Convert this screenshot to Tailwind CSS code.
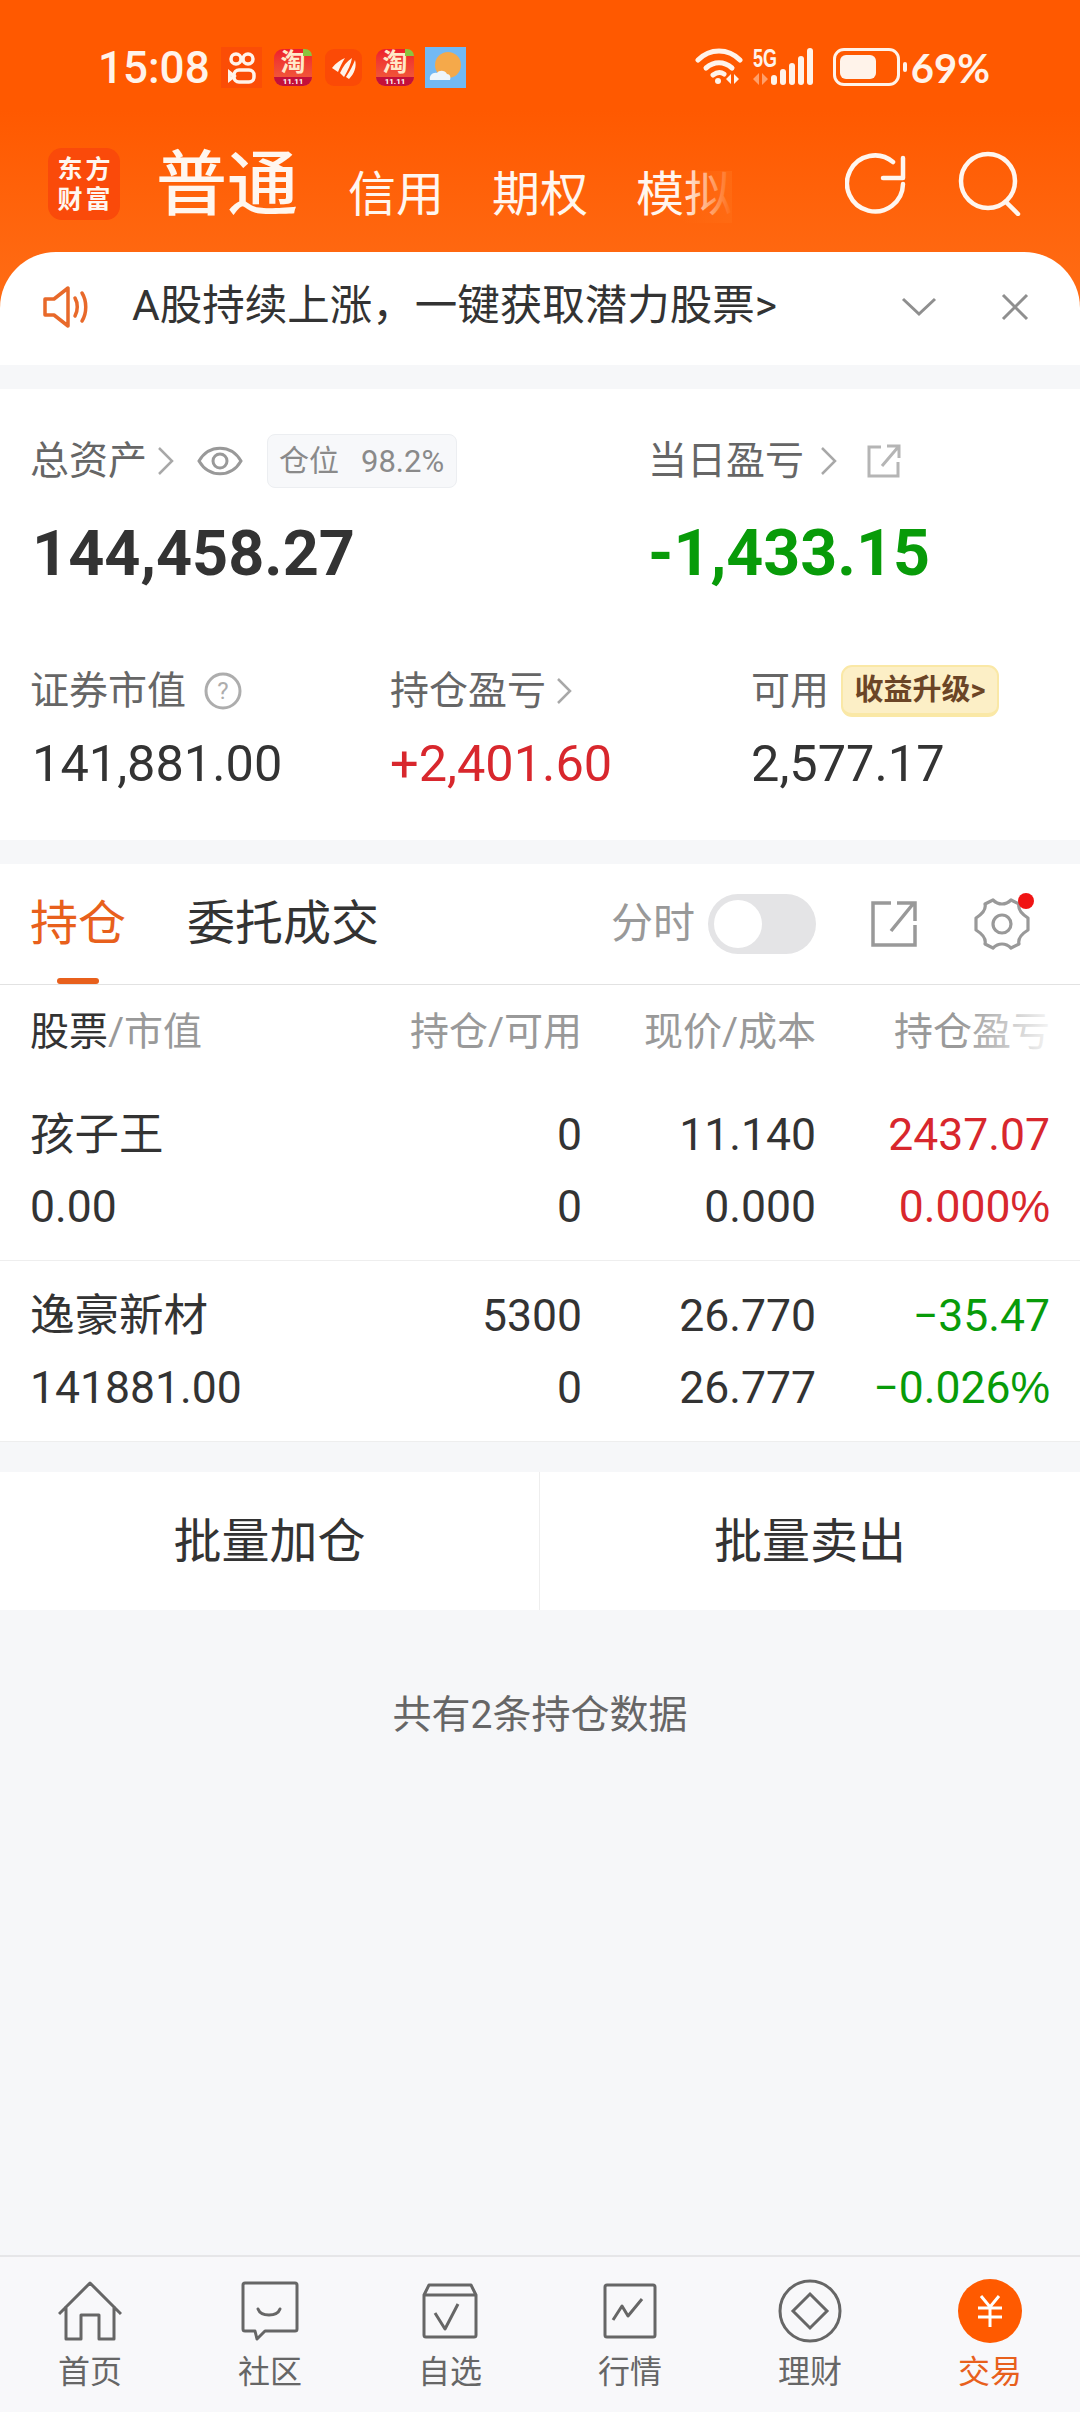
<!DOCTYPE html>
<html lang="zh-CN">
<head>
    <meta charset="UTF-8">
    <meta name="viewport" content="width=device-width, initial-scale=1.0">
    <title>交易 - 持仓</title>
    <script src="https://cdn.jsdelivr.net/npm/@tailwindcss/browser@4"></script>
</head>
<body class="w-[1080px] h-[2412px] overflow-hidden bg-[#f6f7f9] flex flex-col font-['Roboto','Noto_Sans_CJK_SC',sans-serif] text-[#333]">

    <!-- Orange top: status bar + account tabs -->
    <div class="bg-gradient-to-b from-[#ff5900] from-30% to-[#ff7219] h-[365px] shrink-0">
        <div class="h-[100px] pt-[47px] pl-[98px] pr-[90px] flex items-start text-[#fff3ea]">
            <span class="w-[123px] h-[41px] flex items-center text-[44px] font-medium leading-none">15:08</span>
            <!-- notification icons -->
            <div class="w-[41px] h-[41px] bg-[#fb4d06] flex items-center justify-center">
                <svg width="28" height="36" viewBox="0 0 28 36" fill="none" stroke="#fff3ea" stroke-width="3.5"><circle cx="8" cy="9" r="5"/><circle cx="20" cy="9" r="5"/><rect x="6" y="20" width="20" height="12" rx="5"/><path d="M6 26 1 22v8z"/></svg>
            </div>
            <div class="ml-[12px] mt-[2px] w-[38px] h-[37px] rounded-[9px] bg-gradient-to-b from-[#ee1c2c] to-[#f2603c] flex flex-col items-center relative">
                <span class="h-[28px] text-[25px] font-bold leading-[28px] text-[#ffe9c9]">淘</span>
                <span class="w-full h-[9px] rounded-b-[9px] bg-[#c4103a] text-[8px] font-bold leading-[9px] text-white text-center">11.11</span>
                <span class="absolute top-0 right-0 w-[9px] h-[7px] rounded-tr-[9px] bg-[#8ac43f]"></span>
            </div>
            <div class="ml-[13px] mt-[2px] w-[37px] h-[37px] rounded-[9px] bg-[#fb4a06] flex items-center justify-center">
                <svg width="26" height="24" viewBox="0 0 26 24" fill="#fff3ea"><path d="M1 12C5 7 9 4 14 2 11 7 9 11 7 16zM9 17C12 10 16 5 21 2 20 8 17 14 13 21zM15 21C19 15 22 9 24 4 26 11 23 18 18 23z"/></svg>
            </div>
            <div class="ml-[14px] mt-[2px] w-[38px] h-[37px] rounded-[9px] bg-gradient-to-b from-[#ee1c2c] to-[#f2603c] flex flex-col items-center relative">
                <span class="h-[28px] text-[25px] font-bold leading-[28px] text-[#ffe9c9]">淘</span>
                <span class="w-full h-[9px] rounded-b-[9px] bg-[#c4103a] text-[8px] font-bold leading-[9px] text-white text-center">11.11</span>
                <span class="absolute top-0 right-0 w-[9px] h-[7px] rounded-tr-[9px] bg-[#8ac43f]"></span>
            </div>
            <div class="ml-[11px] w-[41px] h-[41px] bg-[#72b9f4]">
                <svg width="41" height="41" viewBox="0 0 41 41"><circle cx="23" cy="18" r="13" fill="#f5a94a"/><path d="M5 33c-1-5 3-8 7-7 2-3 8-3 10 1 3 0 4 3 3 6z" fill="#eef6fb"/></svg>
            </div>
            <!-- system icons -->
            <div class="ml-auto flex items-start">
                <svg width="48" height="38" viewBox="0 0 48 38" fill="none" stroke="#fff3ea" stroke-width="5" stroke-linecap="round">
                    <path d="M3 13C15 1 33 1 45 13"/><path d="M11 21c8-7 18-7 26 0"/><path d="M18 28c4-3 8-3 11-1"/>
                    <circle cx="23" cy="34" r="3" fill="#fff3ea" stroke="none"/>
                    <path d="M36 27v10l-5-5zM39 27v10l5-5z" fill="#fff3ea" stroke="none"/>
                </svg>
                <div class="ml-[10px] w-[26px] flex flex-col">
                    <span class="mt-[1px] h-[20px] text-[25px] font-bold leading-[20px] font-['Liberation_Sans'] scale-x-[0.72] origin-left whitespace-nowrap">5G</span>
                    <svg class="mt-[5px]" width="16" height="12" viewBox="0 0 16 12" fill="#ff9f6a"><path d="M6 0v12L0 6zM9 0v12l6-6z"/></svg>
                </div>
                <div class="ml-[-8px] mt-[1px] h-[37px] flex items-end gap-[3px]">
                    <span class="w-[6px] h-[10px] bg-[#fff3ea] rounded-[3px]"></span>
                    <span class="w-[6px] h-[16px] bg-[#fff3ea] rounded-[3px]"></span>
                    <span class="w-[6px] h-[22px] bg-[#fff3ea] rounded-[3px]"></span>
                    <span class="w-[6px] h-[29px] bg-[#fff3ea] rounded-[3px]"></span>
                    <span class="w-[6px] h-[37px] bg-[#fff3ea] rounded-[3px]"></span>
                </div>
                <div class="ml-[20px] mt-[1px] w-[67px] h-[38px] rounded-[11px] border-[3px] border-[#fff3ea] p-[4px]">
                    <div class="w-[36px] h-full bg-[#fff3ea] rounded-[6px]"></div>
                </div>
                <span class="ml-[3px] mt-[15px] w-[4px] h-[10px] rounded-[2px] bg-[#fff3ea]"></span>
                <span class="ml-[4px] mt-[3px] text-[40px] font-['Lato'] font-bold leading-[36px] whitespace-nowrap">69%</span>
            </div>
        </div>

        <div class="h-[152px] pl-[48px] flex items-start text-[#fff6ef]">
            <div class="mt-[48px] w-[72px] h-[72px] rounded-[14px] bg-[#fa4a0a] grid grid-cols-2 place-items-center py-[6px] px-[8px] text-[25px] font-bold leading-none">
                <span>东</span><span>方</span><span>财</span><span>富</span>
            </div>
            <span class="ml-[36px] mt-[47px] text-[71px] font-medium leading-[76px]">普通</span>
            <span class="ml-[50px] mt-[71px] text-[48px] leading-[48px]">信用</span>
            <span class="ml-[48px] mt-[71px] text-[48px] leading-[48px]">期权</span>
            <div class="relative ml-[48px] mt-[71px] w-[120px]">
                <span class="text-[48px] leading-[48px]">模拟</span>
                <span class="absolute left-[46px] top-0 w-[50px] h-[52px] bg-gradient-to-r from-[#ff6a12]/0 to-[#ff6a12]"></span>
            </div>
            <svg class="ml-[89px] mt-[52px]" width="64" height="64" viewBox="0 0 64 64" fill="none" stroke="#fff6ef" stroke-width="4.5" stroke-linecap="round" stroke-linejoin="round">
                <path d="M58 32A28 28 0 1 1 48 10"/><path d="M58 6v20H38"/>
            </svg>
            <svg class="ml-[48px] mt-[50px]" width="66" height="66" viewBox="0 0 66 66" fill="none" stroke="#fff6ef" stroke-width="4.5" stroke-linecap="round">
                <circle cx="31" cy="31" r="27"/><path d="M49 52l12 12"/>
            </svg>
        </div>

        <!-- Notice -->
        <div class="h-[113px] bg-white rounded-t-[56px] pl-[43px] pb-[4px] flex items-center">
            <svg width="46" height="42" viewBox="0 0 46 42" fill="none" stroke="#e8692a" stroke-width="3.5" stroke-linejoin="round" stroke-linecap="round">
                <path d="M2 13h9L25 2v38L11 29H2z"/><path d="M32 12c3 5 3 13 0 18"/><path d="M39 7c5 8 5 20 0 28"/>
            </svg>
            <span class="ml-[43px] w-[760px] text-[42.5px] leading-none text-[#333] whitespace-nowrap">A股持续上涨，一键获取潜力股票&gt;</span>
            <svg class="ml-[9px]" width="36" height="20" viewBox="0 0 36 20" fill="none" stroke="#8f8f8f" stroke-width="3"><path d="M2 2l16 15L34 2"/></svg>
            <svg class="ml-[64px]" width="28" height="28" viewBox="0 0 28 28" fill="none" stroke="#8f8f8f" stroke-width="3"><path d="M2 2l24 24M26 2 2 26"/></svg>
        </div>
    </div>

    <!-- Account summary -->
    <section class="mt-[24px] h-[451px] bg-white shrink-0 pl-[30px]">
        <div class="pt-[45px] flex items-center h-[99px]">
            <div class="w-[618px] flex items-center">
                <span class="text-[39px] text-[#666] leading-none">总资产</span>
                <svg class="ml-[10px]" width="18" height="30" viewBox="0 0 18 30" fill="none" stroke="#a8a8a8" stroke-width="2.5"><path d="M2 2l13 13L2 28"/></svg>
                <svg class="ml-[22px]" width="46" height="32" viewBox="0 0 46 32" fill="none" stroke="#999" stroke-width="3"><path d="M2 16C12 -1 34 -1 44 16 34 33 12 33 2 16z"/><circle cx="23" cy="16" r="7"/></svg>
                <div class="ml-[24px] w-[190px] h-[54px] rounded-[8px] border border-[#eceef1] bg-[#f7f8fa] flex items-center pl-[11px] text-[30px] text-[#8a8a8a] leading-none">
                    <span>仓位</span><span class="ml-[22px] text-[31px]">98.2%</span>
                </div>
            </div>
            <span class="text-[39px] text-[#666] leading-none">当日盈亏</span>
            <svg class="ml-[16px]" width="18" height="30" viewBox="0 0 18 30" fill="none" stroke="#a8a8a8" stroke-width="2.5"><path d="M2 2l13 13L2 28"/></svg>
            <svg class="ml-[29px]" width="34" height="34" viewBox="0 0 34 34" fill="none" stroke="#b5b5b5" stroke-width="3"><path d="M14 3H2v29h29V18M15 22 32 2M20 2h12v12"/></svg>
        </div>
        <div class="mt-[34px] flex items-center h-[62px] font-bold text-[63px] leading-none">
            <span class="w-[618px] pl-[2px] text-[#333]">144,458.27</span>
            <span class="text-[64.5px] text-[#089b09]">-1,433.15</span>
        </div>
        <div class="mt-[81px] flex items-center h-[52px]">
            <div class="w-[360px] flex items-center">
                <span class="text-[39px] text-[#666] leading-none">证券市值</span>
                <svg class="ml-[18px]" width="38" height="38" viewBox="0 0 38 38" fill="none" stroke="#adadad" stroke-width="3"><circle cx="19" cy="19" r="17"/><text x="19" y="27" text-anchor="middle" font-size="24" fill="#adadad" stroke="none" font-family="Roboto">?</text></svg>
            </div>
            <div class="w-[361px] flex items-center">
                <span class="text-[39px] text-[#666] leading-none">持仓盈亏</span>
                <svg class="ml-[10px]" width="16" height="28" viewBox="0 0 16 28" fill="none" stroke="#a8a8a8" stroke-width="2.5"><path d="M2 2l12 12L2 26"/></svg>
            </div>
            <span class="text-[39px] text-[#666] leading-none">可用</span>
            <div class="ml-[12px] w-[158px] h-[52px] rounded-[11px] bg-[#fcefc6] border-[2px] border-b-[4px] border-[#fae8a6] flex items-center justify-center text-[29px] font-bold text-[#6b4526] leading-none whitespace-nowrap">收益升级&gt;</div>
        </div>
        <div class="mt-[22px] flex items-center h-[50px] text-[50.5px] leading-none text-[#333]">
            <span class="w-[360px] pl-[2px]">141,881.00</span>
            <span class="w-[361px] text-[#d8272d]">+2,401.60</span>
            <span>2,577.17</span>
        </div>
    </section>

    <!-- Positions -->
    <section class="mt-[24px] bg-white shrink-0 border-b border-[#eeeeee]">
        <div class="h-[121px] border-b border-[#e2e2e2] pl-[30px] flex items-center relative">
            <span class="text-[48px] text-[#e8601c] leading-none">持仓</span>
            <span class="ml-[61px] text-[48px] text-[#333] leading-none">委托成交</span>
            <span class="ml-[232px] text-[42px] text-[#999] leading-none">分时</span>
            <div class="ml-[13px] w-[108px] h-[60px] rounded-full bg-[#e4e4e6] p-[6px]">
                <div class="w-[48px] h-[48px] rounded-full bg-white"></div>
            </div>
            <svg class="ml-[55px]" width="46" height="46" viewBox="0 0 46 46" fill="none" stroke="#999" stroke-width="3.5"><path d="M20 2H2v42h42V24M20 30 42 3M26 2h18v18"/></svg>
            <div class="ml-[57px] relative">
                <svg width="56" height="54" viewBox="0 0 56 54" fill="none" stroke="#999" stroke-width="3.2" stroke-linejoin="round"><path d="M19 3c3 3 6 4 9 4s6-1 9-4l8 4c-1 4 1 9 9 14v12c-8 5-10 10-9 14l-8 4c-3-3-6-4-9-4s-6 1-9 4l-8-4c1-4-1-9-9-14V21c8-5 10-10 9-14z"/><circle cx="28" cy="27" r="9"/></svg>
                <span class="absolute right-[-4px] top-[-4px] w-[16px] h-[16px] rounded-full bg-[#f01414]"></span>
            </div>
            <span class="absolute left-[57px] bottom-0 w-[42px] h-[6px] rounded-full bg-[#e8601c]"></span>
        </div>

        <div class="relative h-[94px] pl-[30px] grid grid-cols-[332px_220px_234px_234px] items-center text-[39px] leading-none text-[#999] whitespace-nowrap">
            <span><span class="text-[#333]">股票</span>/市值</span>
            <span class="text-right">持仓/可用</span>
            <span class="text-right">现价/成本</span>
            <span class="text-right">持仓盈亏</span>
            <span class="absolute right-[20px] top-[20px] w-[100px] h-[50px] bg-gradient-to-r from-white/0 to-white"></span>
        </div>

        <div class="h-[182px] pl-[30px] pt-[20px] border-b border-[#eeeeee] grid grid-cols-[332px_220px_234px_234px] grid-rows-[72px_72px] items-center text-[44.5px] leading-none text-[#333]">
            <span>孩子王</span><span class="text-right">0</span><span class="text-right">11.140</span><span class="text-right text-[#d8272d]">2437.07</span>
            <span>0.00</span><span class="text-right">0</span><span class="text-right">0.000</span><span class="text-right text-[#d8272d]">0.000<span class="font-['Liberation_Sans']">%</span></span>
        </div>
        <div class="h-[180px] pl-[30px] pt-[19px] grid grid-cols-[332px_220px_234px_234px] grid-rows-[72px_72px] items-center text-[44.5px] leading-none text-[#333]">
            <span>逸豪新材</span><span class="text-right">5300</span><span class="text-right">26.770</span><span class="text-right text-[#089b09]">−35.47</span>
            <span>141881.00</span><span class="text-right">0</span><span class="text-right">26.777</span><span class="text-right text-[#089b09]">−0.026<span class="font-['Liberation_Sans']">%</span></span>
        </div>
    </section>

    <!-- Batch actions -->
    <div class="mt-[30px] h-[138px] bg-white shrink-0 flex items-center text-[48px] leading-none text-[#333]">
        <span class="w-[540px] h-full pt-[2px] flex items-center justify-center border-r border-[#eeeeee]">批量加仓</span>
        <span class="w-[540px] pt-[2px] text-center">批量卖出</span>
    </div>

    <main class="flex-1 pt-[86px] text-center text-[39px] leading-[38px] text-[#666]">共有2条持仓数据</main>

    <!-- Bottom nav -->
    <nav class="h-[157px] shrink-0 bg-[#f8f8fa] border-t-2 border-[#e6e6e8] grid grid-cols-6 text-[32px] leading-none text-[#666]">
        <div class="flex flex-col items-center pt-[22px]">
            <div class="h-[64px] flex items-center">
                <svg width="64" height="60" viewBox="0 0 64 60" fill="none" stroke="#666" stroke-width="3" stroke-linejoin="round"><path d="M1 33 32 2l31 31M8 25v33h15V34h18v24h15V25"/></svg>
            </div>
            <span class="mt-[13px]">首页</span>
        </div>
        <div class="flex flex-col items-center pt-[22px]">
            <div class="h-[64px] flex items-center">
                <svg width="58" height="60" viewBox="0 0 58 60" fill="none" stroke="#666" stroke-width="3" stroke-linejoin="round"><path d="M4 2h50a2 2 0 0 1 2 2v44a2 2 0 0 1-2 2H24l-8 8-2-8H4a2 2 0 0 1-2-2V4a2 2 0 0 1 2-2z"/><path d="M17 28c3 8 19 8 22 0" stroke-linecap="round"/></svg>
            </div>
            <span class="mt-[13px]">社区</span>
        </div>
        <div class="flex flex-col items-center pt-[22px]">
            <div class="h-[64px] flex items-center">
                <svg width="56" height="56" viewBox="0 0 56 56" fill="none" stroke="#666" stroke-width="3" stroke-linejoin="round"><path d="M2 12 7 2h42l5 10v40a2 2 0 0 1-2 2H4a2 2 0 0 1-2-2zM2 12h52"/><path d="M13 30l10 16 13-25"/></svg>
            </div>
            <span class="mt-[13px]">自选</span>
        </div>
        <div class="flex flex-col items-center pt-[22px]">
            <div class="h-[64px] flex items-center">
                <svg width="54" height="56" viewBox="0 0 54 56" fill="none" stroke="#666" stroke-width="3" stroke-linejoin="round"><rect x="2" y="2" width="50" height="52" rx="2"/><path d="M10 37l9-14 6 10 14-17"/></svg>
            </div>
            <span class="mt-[13px]">行情</span>
        </div>
        <div class="flex flex-col items-center pt-[22px]">
            <svg width="64" height="64" viewBox="0 0 64 64" fill="none" stroke="#666" stroke-width="3"><circle cx="32" cy="32" r="30"/><path d="M32 15l17 17-17 17-17-17z"/></svg>
            <span class="mt-[13px]">理财</span>
        </div>
        <div class="flex flex-col items-center pt-[22px] text-[#e8601c]">
            <div class="w-[64px] h-[64px] rounded-full bg-[#ff5a00] flex items-center justify-center">
                <svg width="28" height="32" viewBox="0 0 28 32" fill="none" stroke="#fff" stroke-width="3"><path d="M5 1l9 11L23 1M2 13h24M2 22h24M14 12v20"/></svg>
            </div>
            <span class="mt-[13px]">交易</span>
        </div>
    </nav>
</body>
</html>
